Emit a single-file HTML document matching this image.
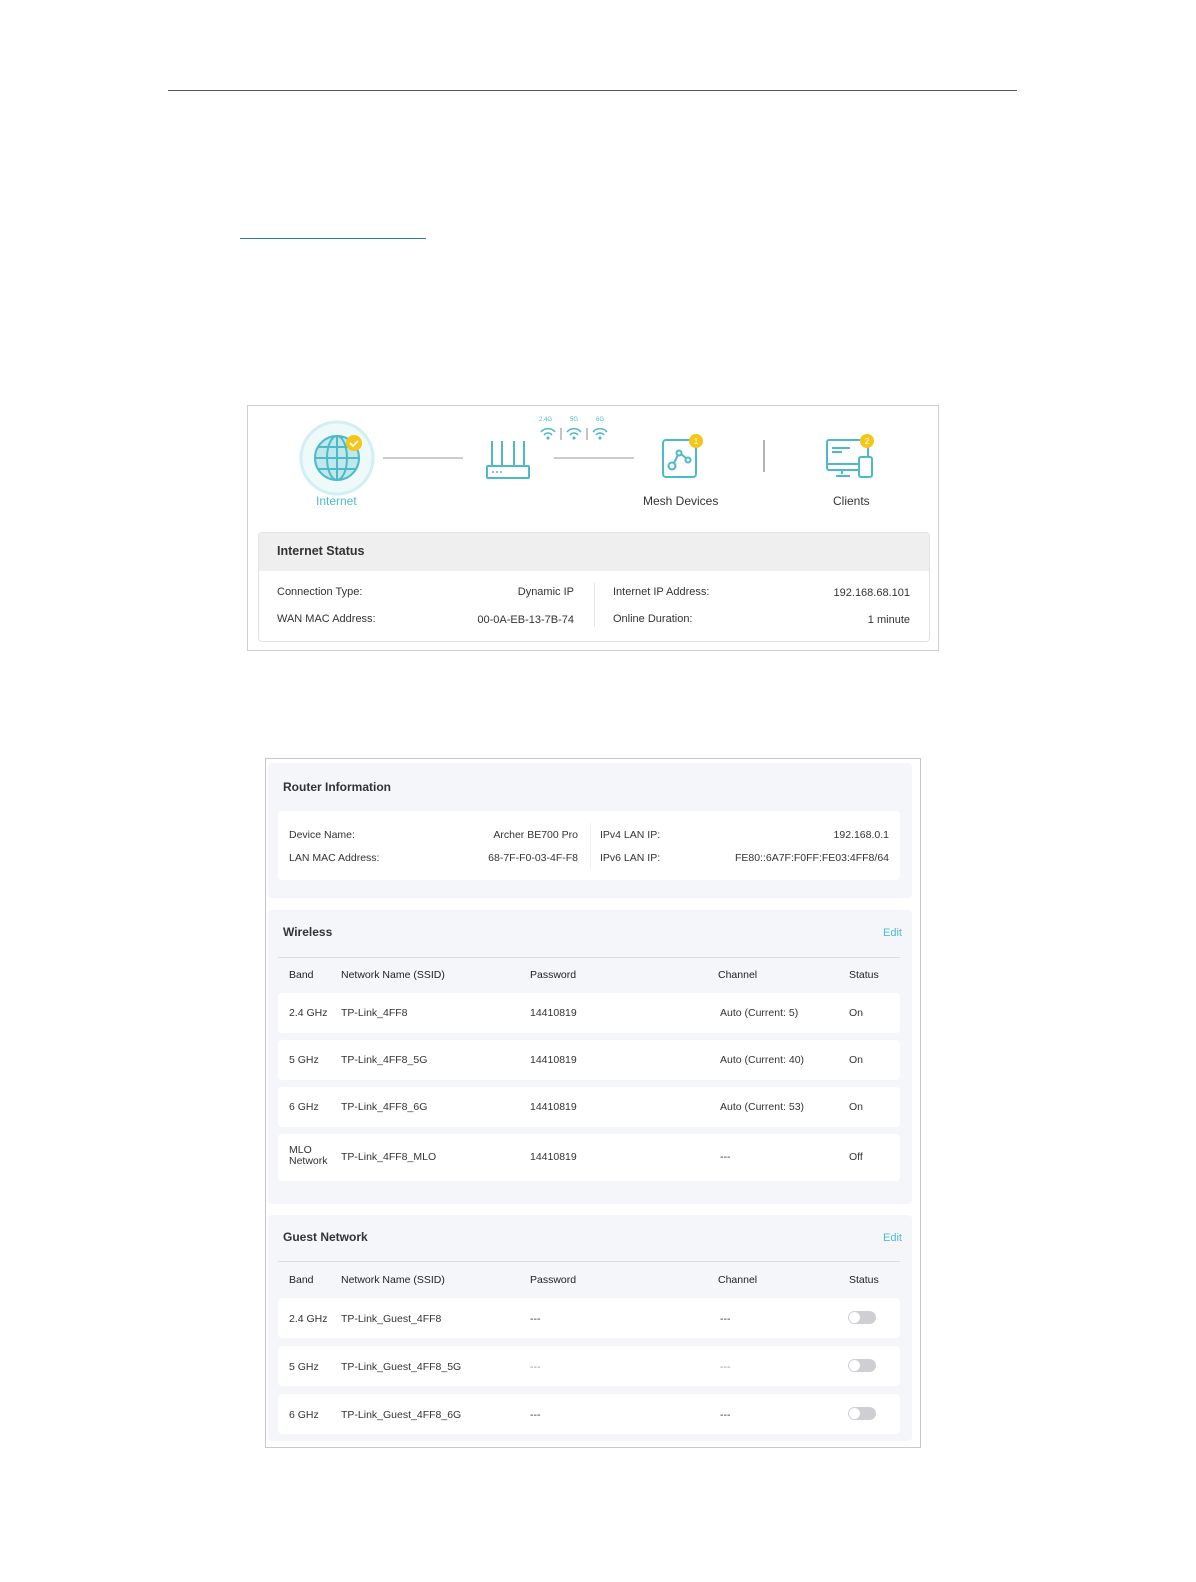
<!DOCTYPE html>
<html><head><meta charset="utf-8"><style>
*{margin:0;padding:0;box-sizing:border-box}
body{width:1196px;height:1582px;background:#fff;position:relative;font-family:"Liberation Sans",Arial,sans-serif;color:#333;overflow:hidden}
.a{position:absolute}
.t{position:absolute;font-size:11px;white-space:nowrap;line-height:12px}
.b{font-weight:bold}
.r{text-align:right}
.panel{position:absolute;background:#f5f6fa;border-radius:4px}
.row{position:absolute;background:#fff;border-radius:4px;left:278px;width:622px}
.tg{position:absolute;width:28px;height:13px;border-radius:7px;background:#cfcfd3}
.tg::after{content:"";position:absolute;left:1px;top:1px;width:11px;height:11px;border-radius:50%;background:#fff}
.teal{color:#4ebccb}
</style></head><body>
<div class="a" style="left:168px;top:90px;width:849px;height:1px;background:#555"></div>
<div class="a" style="left:240px;top:238px;width:186px;height:1px;background:#2f7a9a"></div>

<!-- Figure 1 -->
<div class="a" style="left:247px;top:405px;width:692px;height:246px;border:1px solid #cfcfcf"></div>
<svg class="a" style="left:290px;top:410px" width="660" height="100" viewBox="0 0 660 100">
  <circle cx="47" cy="48" r="36" fill="#eef9fa" stroke="#d2eff2" stroke-width="3"/>
  <circle cx="47" cy="48" r="22" fill="#bfe7ec" stroke="#4dbac8" stroke-width="2"/>
  <ellipse cx="47" cy="48" rx="10" ry="22" fill="none" stroke="#4dbac8" stroke-width="2"/>
  <line x1="47" y1="26" x2="47" y2="70" stroke="#4dbac8" stroke-width="2"/>
  <line x1="25" y1="48" x2="69" y2="48" stroke="#4dbac8" stroke-width="2"/>
  <path d="M29 37 H65 M29 59 H65" stroke="#4dbac8" stroke-width="2"/>
  <circle cx="64" cy="33" r="8" fill="#f5c518"/>
  <path d="M60 33 l3 3 l5 -5" stroke="#fff" stroke-width="1.8" fill="none"/>
  <line x1="93" y1="48" x2="173" y2="48" stroke="#999" stroke-width="1"/>
  <g stroke="#4dbac8" stroke-width="2" fill="none">
    <rect x="197" y="56" width="42" height="12" rx="1"/>
    <path d="M202 56V31M212 56V31M224 56V31M234 56V31"/>
  </g>
  <g fill="#4dbac8"><circle cx="203" cy="62" r="1"/><circle cx="207" cy="62" r="1"/><circle cx="211" cy="62" r="1"/></g>
  <g font-family="Liberation Sans" font-size="6" fill="#4dbac8"><text x="249" y="11">2.4G</text><text x="280" y="11">5G</text><text x="306" y="11">6G</text></g>
  <g stroke="#4dbac8" stroke-width="1.5" fill="none">
    <path d="M251 22a9 9 0 0 1 14 0M254 25a5 5 0 0 1 8 0"/><circle cx="258" cy="28" r=".8" fill="#4dbac8"/>
    <path d="M277 22a9 9 0 0 1 14 0M280 25a5 5 0 0 1 8 0"/><circle cx="284" cy="28" r=".8" fill="#4dbac8"/>
    <path d="M303 22a9 9 0 0 1 14 0M306 25a5 5 0 0 1 8 0"/><circle cx="310" cy="28" r=".8" fill="#4dbac8"/>
  </g>
  <line x1="271" y1="18" x2="271" y2="30" stroke="#888"/><line x1="297" y1="18" x2="297" y2="30" stroke="#888"/>
  <line x1="264" y1="48" x2="344" y2="48" stroke="#999" stroke-width="1"/>
  <g stroke="#4dbac8" stroke-width="2" fill="none">
    <rect x="373" y="30" width="33" height="37" rx="3"/>
    <circle cx="382" cy="56" r="3.5"/><circle cx="389" cy="43" r="2.5"/><circle cx="398" cy="50" r="2.5"/>
    <path d="M384 53l4-8M391 44l5 4"/>
  </g>
  <circle cx="406" cy="31" r="7" fill="#f5c518"/><text x="406" y="34" font-size="8" fill="#fff" text-anchor="middle" font-family="Liberation Sans">1</text>
  <line x1="474" y1="30" x2="474" y2="62" stroke="#999" stroke-width="1.5"/>
  <g stroke="#4dbac8" stroke-width="2" fill="none">
    <rect x="537" y="30" width="41" height="30" rx="2"/>
    <path d="M542 38h18M542 42h10M537 54h33M552 60v4M546 66h14"/>
    <rect x="569" y="47" width="13" height="20" rx="2" fill="#fff"/>
  </g>
  <circle cx="577" cy="31" r="7" fill="#f5c518"/><text x="577" y="34" font-size="8" fill="#fff" text-anchor="middle" font-family="Liberation Sans">2</text>
</svg>
<div class="t teal" style="left:316px;top:495px;font-size:12px">Internet</div>
<div class="t" style="left:643px;top:495px;font-size:12px">Mesh Devices</div>
<div class="t" style="left:833px;top:495px;font-size:12px">Clients</div>

<div class="a" style="left:258px;top:532px;width:672px;height:110px;border:1px solid #e2e2e2;border-radius:4px;overflow:hidden">
  <div class="a" style="left:0;top:0;width:672px;height:38px;background:#efefef"></div>
</div>
<div class="t b" style="left:277px;top:545px;font-size:12.5px">Internet Status</div>
<div class="a" style="left:594px;top:583px;width:1px;height:44px;background:#e6e6e6"></div>
<div class="t" style="left:277px;top:586px">Connection Type:</div>
<div class="t r" style="left:474px;width:100px;top:586px">Dynamic IP</div>
<div class="t" style="left:277px;top:613px">WAN MAC Address:</div>
<div class="t r" style="left:454px;width:120px;top:614px">00-0A-EB-13-7B-74</div>
<div class="t" style="left:613px;top:586px">Internet IP Address:</div>
<div class="t r" style="left:790px;width:120px;top:587px">192.168.68.101</div>
<div class="t" style="left:613px;top:613px">Online Duration:</div>
<div class="t r" style="left:790px;width:120px;top:614px">1 minute</div>

<!-- Figure 2 -->
<div class="a" style="left:265px;top:758px;width:656px;height:690px;border:1px solid #c8c8c8"></div>
<div class="panel" style="left:268px;top:763px;width:644px;height:135px"></div>
<div class="t b" style="left:283px;top:781px;font-size:12px">Router Information</div>
<div class="row" style="top:811px;height:69px"></div>
<div class="a" style="left:590px;top:823px;width:1px;height:46px;background:#eee"></div>
<div class="t" style="left:289px;top:829px;font-size:10.5px">Device Name:</div>
<div class="t r" style="left:458px;width:120px;top:829px;font-size:10.5px">Archer BE700 Pro</div>
<div class="t" style="left:289px;top:852px;font-size:10.5px">LAN MAC Address:</div>
<div class="t r" style="left:458px;width:120px;top:852px;font-size:10.5px">68-7F-F0-03-4F-F8</div>
<div class="t" style="left:600px;top:829px;font-size:10.5px">IPv4 LAN IP:</div>
<div class="t r" style="left:729px;width:160px;top:829px;font-size:10.5px">192.168.0.1</div>
<div class="t" style="left:600px;top:852px;font-size:10.5px">IPv6 LAN IP:</div>
<div class="t r" style="left:709px;width:180px;top:852px;font-size:10.5px">FE80::6A7F:F0FF:FE03:4FF8/64</div>

<div class="panel" style="left:268px;top:910px;width:644px;height:294px"></div>
<div class="t b" style="left:283px;top:926px;font-size:12px">Wireless</div>
<div class="t teal" style="left:883px;top:927px">Edit</div>
<div class="a" style="left:278px;top:957px;width:622px;height:1px;background:#dcdde2"></div>
<div class="t b" style="left:289px;top:969px;font-size:10.5px;font-weight:normal;color:#222">Band</div>
<div class="t" style="left:341px;top:969px;font-size:10.5px;color:#222">Network Name (SSID)</div>
<div class="t" style="left:530px;top:969px;font-size:10.5px;color:#222">Password</div>
<div class="t" style="left:718px;top:969px;font-size:10.5px;color:#222">Channel</div>
<div class="t" style="left:849px;top:969px;font-size:10.5px;color:#222">Status</div>

<div class="row" style="top:993px;height:40px"></div>
<div class="row" style="top:1040px;height:40px"></div>
<div class="row" style="top:1087px;height:40px"></div>
<div class="row" style="top:1134px;height:47px"></div>
<div class="t" style="left:289px;top:1007px;font-size:10.5px">2.4 GHz</div><div class="t" style="left:341px;top:1007px;font-size:10.5px">TP-Link_4FF8</div><div class="t" style="left:530px;top:1007px;font-size:10.5px">14410819</div><div class="t" style="left:720px;top:1007px;font-size:10.5px">Auto (Current: 5)</div><div class="t" style="left:849px;top:1007px;font-size:10.5px">On</div>
<div class="t" style="left:289px;top:1054px;font-size:10.5px">5 GHz</div><div class="t" style="left:341px;top:1054px;font-size:10.5px">TP-Link_4FF8_5G</div><div class="t" style="left:530px;top:1054px;font-size:10.5px">14410819</div><div class="t" style="left:720px;top:1054px;font-size:10.5px">Auto (Current: 40)</div><div class="t" style="left:849px;top:1054px;font-size:10.5px">On</div>
<div class="t" style="left:289px;top:1101px;font-size:10.5px">6 GHz</div><div class="t" style="left:341px;top:1101px;font-size:10.5px">TP-Link_4FF8_6G</div><div class="t" style="left:530px;top:1101px;font-size:10.5px">14410819</div><div class="t" style="left:720px;top:1101px;font-size:10.5px">Auto (Current: 53)</div><div class="t" style="left:849px;top:1101px;font-size:10.5px">On</div>
<div class="t" style="left:289px;top:1145px;font-size:10.5px;line-height:11px">MLO<br>Network</div><div class="t" style="left:341px;top:1151px;font-size:10.5px">TP-Link_4FF8_MLO</div><div class="t" style="left:530px;top:1151px;font-size:10.5px">14410819</div><div class="t" style="left:720px;top:1151px;font-size:10.5px">---</div><div class="t" style="left:849px;top:1151px;font-size:10.5px">Off</div>

<div class="panel" style="left:268px;top:1215px;width:644px;height:226px"></div>
<div class="t b" style="left:283px;top:1231px;font-size:12px">Guest Network</div>
<div class="t teal" style="left:883px;top:1232px">Edit</div>
<div class="a" style="left:278px;top:1261px;width:622px;height:1px;background:#dcdde2"></div>
<div class="t" style="left:289px;top:1274px;font-size:10.5px;color:#222">Band</div>
<div class="t" style="left:341px;top:1274px;font-size:10.5px;color:#222">Network Name (SSID)</div>
<div class="t" style="left:530px;top:1274px;font-size:10.5px;color:#222">Password</div>
<div class="t" style="left:718px;top:1274px;font-size:10.5px;color:#222">Channel</div>
<div class="t" style="left:849px;top:1274px;font-size:10.5px;color:#222">Status</div>

<div class="row" style="top:1298px;height:40px"></div>
<div class="row" style="top:1346px;height:40px"></div>
<div class="row" style="top:1394px;height:40px"></div>
<div class="t" style="left:289px;top:1313px;font-size:10.5px">2.4 GHz</div><div class="t" style="left:341px;top:1313px;font-size:10.5px">TP-Link_Guest_4FF8</div><div class="t" style="left:530px;top:1313px;font-size:10.5px">---</div><div class="t" style="left:720px;top:1313px;font-size:10.5px">---</div><div class="tg" style="left:848px;top:1311px"></div>
<div class="t" style="left:289px;top:1361px;font-size:10.5px">5 GHz</div><div class="t" style="left:341px;top:1361px;font-size:10.5px">TP-Link_Guest_4FF8_5G</div><div class="t" style="left:530px;top:1361px;font-size:10.5px;color:#999">---</div><div class="t" style="left:720px;top:1361px;font-size:10.5px;color:#999">---</div><div class="tg" style="left:848px;top:1359px"></div>
<div class="t" style="left:289px;top:1409px;font-size:10.5px">6 GHz</div><div class="t" style="left:341px;top:1409px;font-size:10.5px">TP-Link_Guest_4FF8_6G</div><div class="t" style="left:530px;top:1409px;font-size:10.5px">---</div><div class="t" style="left:720px;top:1409px;font-size:10.5px">---</div><div class="tg" style="left:848px;top:1407px"></div>
</body></html>
